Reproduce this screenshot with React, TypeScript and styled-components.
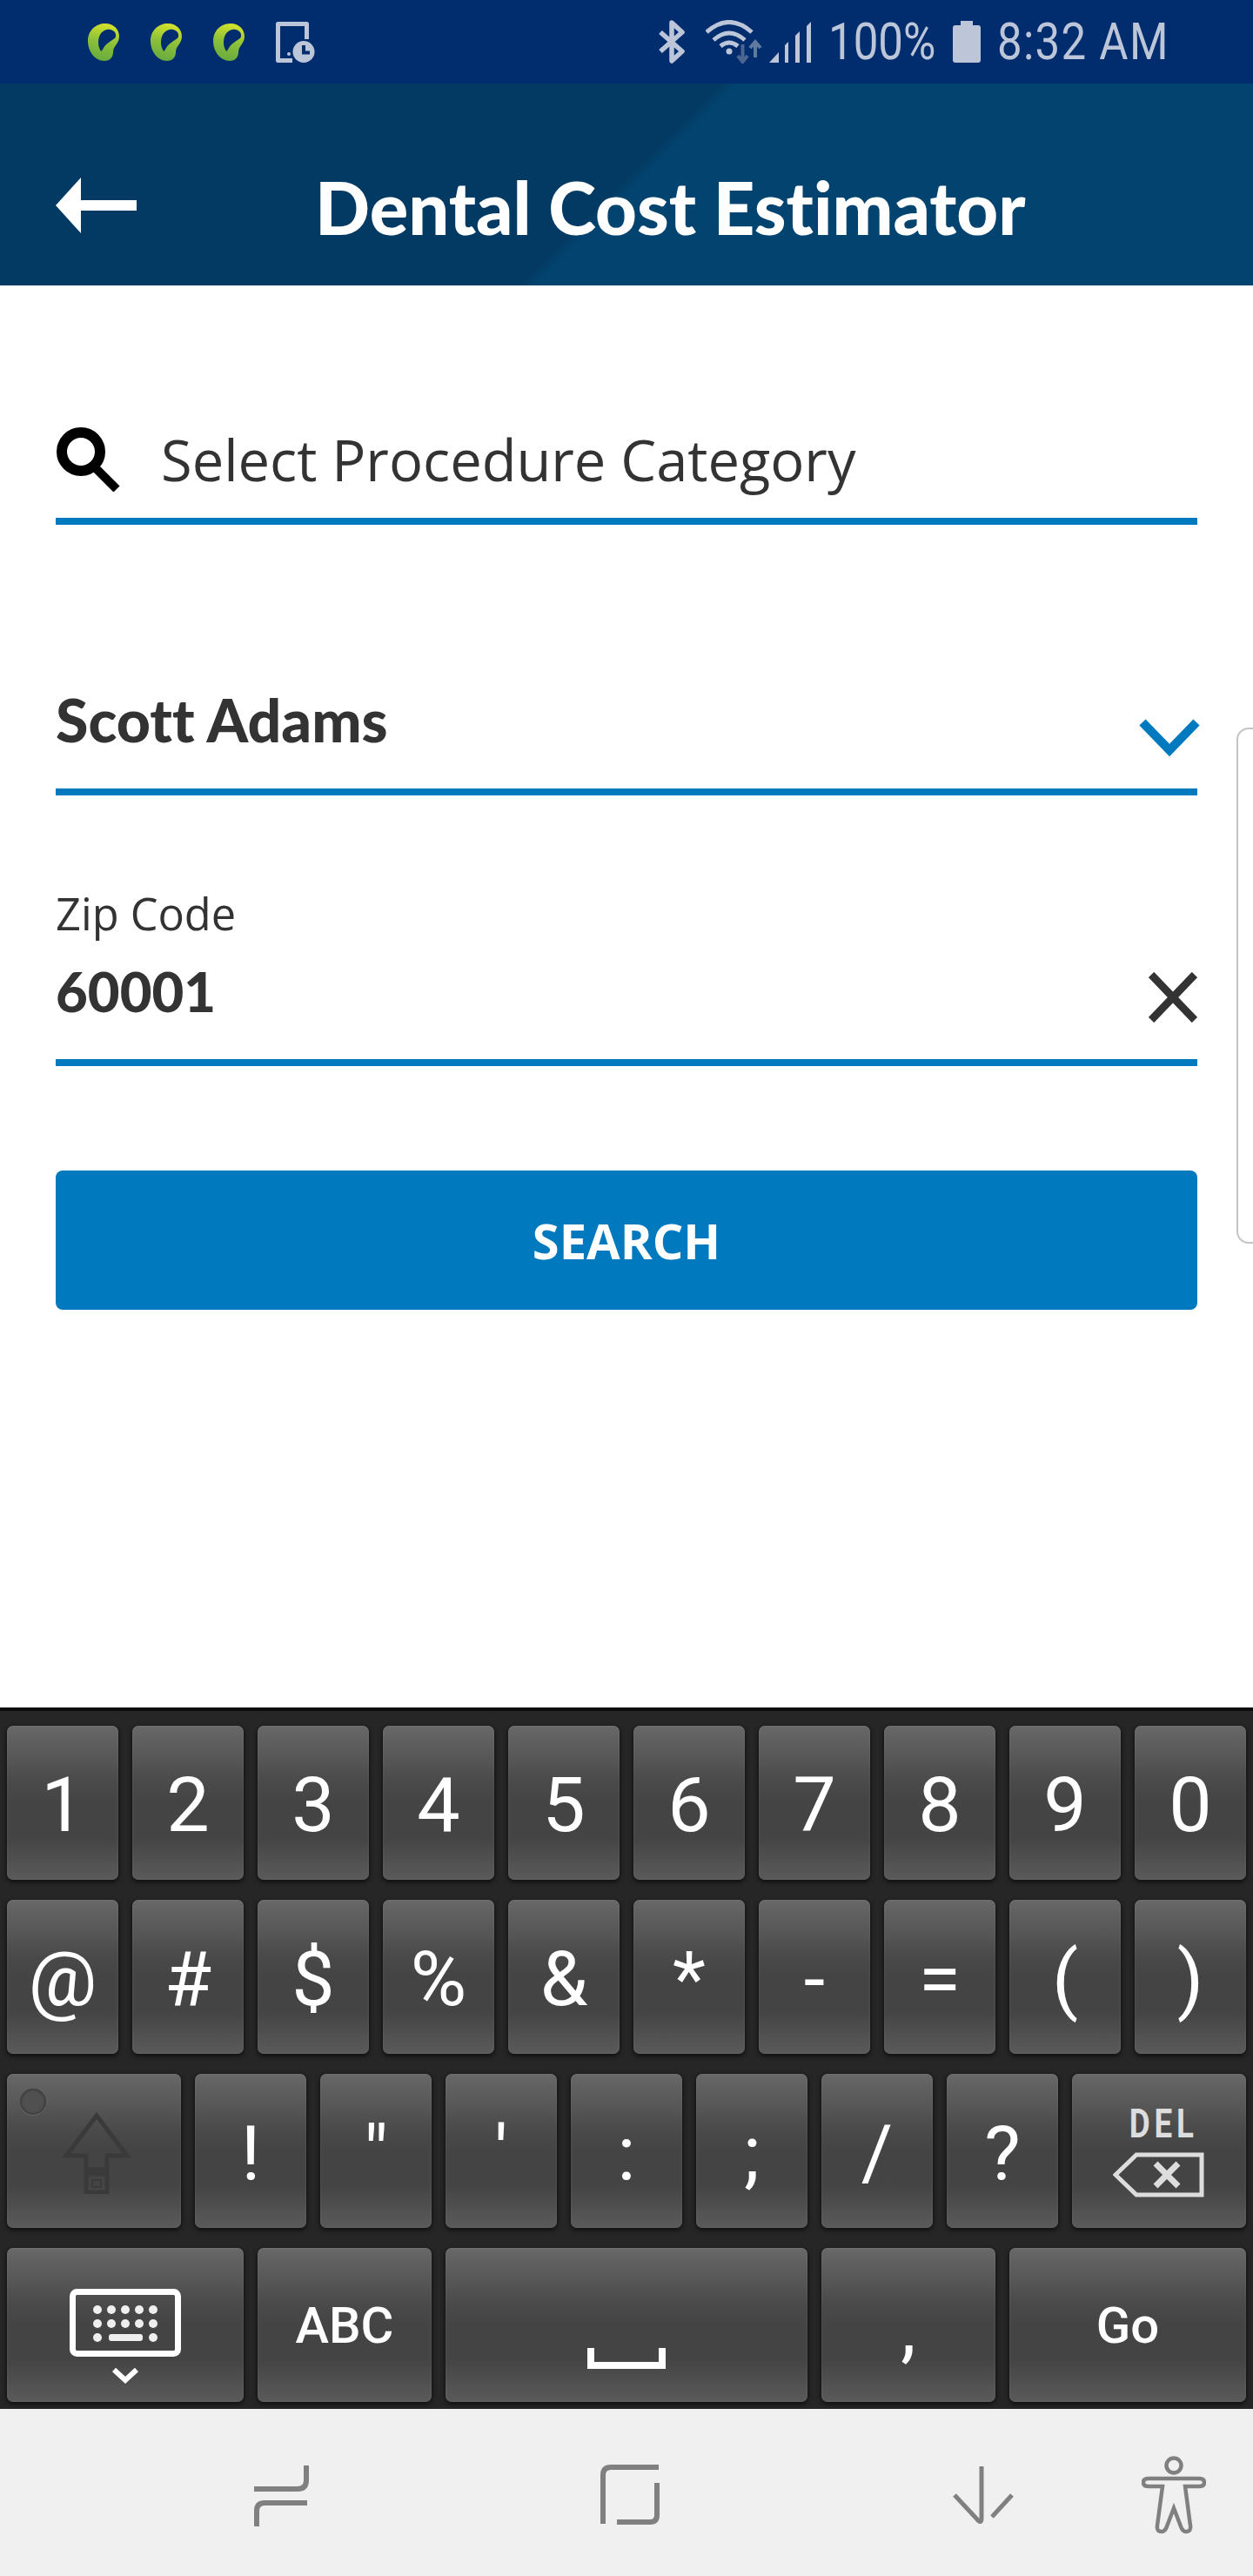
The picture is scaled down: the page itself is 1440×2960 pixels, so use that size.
import styled, { createGlobalStyle } from "styled-components";

const GlobalStyle = createGlobalStyle`
	html, body {
		margin: 0;
		padding: 0;
		background: #fff;
	}
`;

const Page = styled.div`
	position: relative;
	width: 1440px;
	height: 2960px;
	display: flex;
	flex-direction: column;
	overflow: hidden;
	background: #fff;
`;

const StatusBar = styled.div`
	height: 96px;
	background: #012d6e;
	display: flex;
	align-items: center;
	padding: 0 102px 0 101px;
	color: #bcc6d8;
	font-family: Roboto, sans-serif;
`;

const NotifyIcons = styled.div`
	display: flex;
	align-items: center;
	gap: 36px;
`;

const SystemIcons = styled.div`
	margin-left: auto;
	display: flex;
	align-items: center;
`;

const StatusText = styled.span<{ $w: number; $left: number; $spacing?: number }>`
	display: inline-block;
	width: ${(p) => p.$w}px;
	margin-left: ${(p) => p.$left}px;
	font-size: 60px;
	line-height: 60px;
	font-weight: 400;
	letter-spacing: ${(p) => p.$spacing ?? 0}px;
	white-space: nowrap;
	transform-origin: left center;
	transform: scaleX(0.85);
`;

const Spaced = styled.svg<{ $left?: number }>`
	display: block;
	flex: none;
	margin-left: ${(p) => p.$left ?? 0}px;
`;

const Header = styled.header`
	box-sizing: border-box;
	height: 232px;
	display: flex;
	align-items: center;
	padding: 48px 0 0 64px;
	background: linear-gradient(135deg, #033a63 0%, #033a63 49.6%, #02436f 50.6%, #02446f 100%);
`;

const Title = styled.h1`
	margin: 4px 0 0 205px;
	font-family: Lato, sans-serif;
	font-size: 83px;
	line-height: 92px;
	font-weight: 900;
	font-variant-ligatures: none;
	color: #fff;
	white-space: nowrap;
`;

const Form = styled.main`
	padding: 0 64px;
`;

const Field = styled.div<{ $top: number; $height: number }>`
	box-sizing: border-box;
	margin-top: ${(p) => p.$top}px;
	height: ${(p) => p.$height}px;
	border-bottom: 8px solid #0079be;
	display: flex;
	justify-content: space-between;
`;

const SearchField = styled(Field)`
	align-items: center;
	justify-content: flex-start;
	gap: 47px;
	padding-bottom: 8px;
`;

const Placeholder = styled.span`
	font-family: "Open Sans", sans-serif;
	font-size: 65px;
	line-height: 88px;
	color: #333;
	white-space: nowrap;
`;

const StrongValue = styled.span<{ $size: number }>`
	font-family: Lato, sans-serif;
	font-size: ${(p) => p.$size}px;
	line-height: 92px;
	font-weight: 900;
	font-variant-ligatures: none;
	color: #333;
	white-space: nowrap;
`;

const ZipColumn = styled.div`
	display: flex;
	flex-direction: column;
	padding-top: 9px;
`;

const ZipLabel = styled.span`
	font-family: "Open Sans", sans-serif;
	font-size: 50.5px;
	line-height: 68px;
	margin-bottom: 9px;
	color: #333;
`;

const SearchButton = styled.button`
	display: block;
	box-sizing: border-box;
	width: 100%;
	height: 160px;
	margin-top: 120px;
	border: 0;
	border-radius: 8px;
	background: #0079be;
	color: #fff;
	font-family: "Open Sans", sans-serif;
	font-size: 56px;
	font-weight: 700;
`;

const SideHandle = styled.div`
	position: absolute;
	right: -4px;
	top: 836px;
	width: 19px;
	height: 589px;
	border: 2px solid #c4c4c4;
	border-radius: 14px 0 0 14px;
	background: #fff;
`;

const Keyboard = styled.section`
	margin-top: auto;
	box-sizing: border-box;
	height: 806px;
	border-top: 4px solid #0c0c0c;
	background: #262626;
	padding: 17px 8px 8px;
	display: flex;
	flex-direction: column;
	gap: 23px;
`;

const KeyRow = styled.div`
	display: flex;
	gap: 16px;
`;

const Key = styled.div<{ $w?: number; $label?: boolean }>`
	position: relative;
	box-sizing: border-box;
	flex: none;
	width: ${(p) => p.$w ?? 128}px;
	height: 177px;
	padding-top: ${(p) => (p.$label ? 0 : 4)}px;
	border-radius: 7px;
	display: flex;
	flex-direction: column;
	align-items: center;
	justify-content: center;
	background: linear-gradient(180deg, #686868 0%, #4a4a4a 36%, #444 50%, #444 72%, #5a5a5a 100%);
	box-shadow:
		inset 0 0 2px 1px rgba(255, 255, 255, 0.06),
		0 2px 4px 1px rgba(0, 0, 0, 0.55);
	color: #fff;
	font-family: Roboto, sans-serif;
	font-size: ${(p) => (p.$label ? 58 : 88)}px;
	font-weight: ${(p) => (p.$label ? 500 : 400)};
	line-height: 100px;
`;

const ShiftDot = styled.span`
	position: absolute;
	left: 15px;
	top: 17px;
	width: 30px;
	height: 30px;
	border-radius: 50%;
	background: #505050;
	box-shadow:
		inset 0 0 2px 2px #3f3f3f,
		0 1px 1px rgba(255, 255, 255, 0.15);
`;

const DelLabel = styled.span`
	display: block;
	font-size: 46px;
	line-height: 36px;
	font-weight: 700;
	letter-spacing: 6px;
	color: #ddd;
	margin: 0 0 15px 10px;
	transform: scaleX(0.8);
`;

const KeyIcon = styled.svg<{ $top?: number; $left?: number; $right?: number }>`
	display: block;
	flex: none;
	margin-top: ${(p) => p.$top ?? 0}px;
	margin-left: ${(p) => p.$left ?? 0}px;
	margin-right: ${(p) => p.$right ?? 0}px;
`;

const NavBar = styled.nav`
	box-sizing: border-box;
	height: 192px;
	flex: none;
	background: #f0f0f0;
	display: flex;
	align-items: center;
	padding: 6px 0 0 290px;
`;

const digits = ["1", "2", "3", "4", "5", "6", "7", "8", "9", "0"];
const symbols = ["@", "#", "$", "%", "&", "*", "-", "=", "(", ")"];
const punctuation = ["!", '"', "'", ":", ";", "/", "?"];
const dotColumns = [32, 48, 64, 80, 96];

function Leaf() {
	return (
		<svg width="36" height="43" viewBox="0 0 36 43">
			<defs>
				<linearGradient id="leafFill" x1="0.6" y1="0" x2="0.4" y2="1">
					<stop offset="0" stopColor="#d6e32c" />
					<stop offset="0.5" stopColor="#8cc03a" />
					<stop offset="1" stopColor="#66aa3e" />
				</linearGradient>
			</defs>
			<path
				d="M20 0C30 0 36 7 36 15C36 23 29 26 29 33C29 39 25 43 19 43C8 43 0 32 0 20C0 8 9 0 20 0Z"
				fill="url(#leafFill)"
			/>
			<path
				d="M22 7C28 6 33 10 32 15C31 19 23 20 18 28C16 32 15 33 14 30C10 22 12 9 22 7Z"
				fill="#012d6e"
			/>
		</svg>
	);
}

export default function App() {
	return (
		<Page>
			<GlobalStyle />
			<StatusBar>
				<NotifyIcons>
					<Leaf />
					<Leaf />
					<Leaf />
					<svg width="45" height="47" viewBox="0 0 45 47">
						<path d="M19 44.5H2.5V2.5H35.5V20" fill="none" stroke="#bcc6d8" strokeWidth="5" strokeLinejoin="round" />
						<circle cx="15" cy="37" r="2" fill="#bcc6d8" />
						<circle cx="32" cy="34.5" r="12.5" fill="#bcc6d8" />
						<path d="M32 27V35.5H39" fill="none" stroke="#012d6e" strokeWidth="4" />
					</svg>
				</NotifyIcons>
				<SystemIcons>
					<Spaced width="31" height="50" viewBox="0 0 31 50">
						<path d="M3 14L28 36L16 47V3L28 14L3 36" fill="none" stroke="#bcc6d8" strokeWidth="5.5" strokeLinejoin="round" />
					</Spaced>
					<Spaced $left={24} width="66" height="50" viewBox="0 0 66 50">
						<g fill="none" stroke="#bcc6d8" strokeWidth="5">
							<path d="M1 14Q27 -9 53 14" />
							<path d="M9 23Q27 7 45 23" />
							<path d="M17 30Q27 22 37 30" />
						</g>
						<circle cx="27" cy="36" r="3.5" fill="#bcc6d8" />
						<path d="M42.5 28V46M37 41L42.5 48L48 41" fill="none" stroke="#4c6593" strokeWidth="4" />
						<path d="M57 43V27M51 32L57 25L63 32" fill="none" stroke="#5f7ba0" strokeWidth="4" />
					</Spaced>
					<Spaced $left={7} width="48" height="47" viewBox="0 0 48 47">
						<polygon points="0,47 11,35 11,47" fill="#bcc6d8" />
						<polygon points="18,47 18,27 22,23 22,47" fill="#bcc6d8" />
						<polygon points="30,47 30,16 35,11 35,47" fill="#bcc6d8" />
						<polygon points="43,47 43,5 48,0 48,47" fill="#bcc6d8" />
					</Spaced>
					<StatusText $left={20} $w={143}>
						100%
					</StatusText>
					<Spaced width="32" height="48" viewBox="0 0 32 48">
						<path d="M9 0H23V5H29Q32 5 32 8V45Q32 48 29 48H3Q0 48 0 45V8Q0 5 3 5H9Z" fill="#bcc6d8" />
					</Spaced>
					<StatusText $left={19} $w={192} $spacing={1.5}>
						8:32 AM
					</StatusText>
				</SystemIcons>
			</StatusBar>

			<Header>
				<svg width="93" height="64" viewBox="0 0 93 64">
					<polygon points="0,32 29,0 29,26 93,26 93,38 29,38 29,64" fill="#fff" />
				</svg>
				<Title>Dental Cost Estimator</Title>
			</Header>

			<Form>
				<SearchField $top={140} $height={135}>
					<svg width="74" height="74" viewBox="0 0 74 74">
						<circle cx="29" cy="28" r="22" fill="none" stroke="#000" strokeWidth="12" />
						<path d="M45 46L70 71" stroke="#000" strokeWidth="10" />
					</svg>
					<Placeholder>Select Procedure Category</Placeholder>
				</SearchField>

				<Field $top={178} $height={133}>
					<StrongValue $size={68}>Scott Adams</StrongValue>
					<KeyIcon $top={45} $right={-4} width="72" height="44" viewBox="0 0 72 44">
						<path d="M5 4L36 36L67 4" fill="none" stroke="#0079be" strokeWidth="10" />
					</KeyIcon>
				</Field>

				<Field $top={93} $height={218}>
					<ZipColumn>
						<ZipLabel>Zip Code</ZipLabel>
						<StrongValue $size={63.5}>60001</StrongValue>
					</ZipColumn>
					<KeyIcon $top={110} width="56" height="58" viewBox="0 0 56 58">
						<path d="M3 3L53 55M53 3L3 55" fill="none" stroke="#333" strokeWidth="9" />
					</KeyIcon>
				</Field>

				<SearchButton>SEARCH</SearchButton>
			</Form>

			<SideHandle />

			<Keyboard>
				<KeyRow>
					{digits.map((d) => (
						<Key key={d}>{d}</Key>
					))}
				</KeyRow>
				<KeyRow>
					{symbols.map((s) => (
						<Key key={s}>{s}</Key>
					))}
				</KeyRow>
				<KeyRow>
					<Key $w={200}>
						<ShiftDot />
						<KeyIcon $left={6} width="80" height="94" viewBox="0 0 80 94">
							<g fill="none" stroke="#3a3a3a" strokeWidth="5">
								<path d="M40 4L75 50H52V66H28V50H5Z" />
								<rect x="28" y="71" width="24" height="21" />
								<rect x="35" y="78" width="10" height="8" strokeWidth="2" />
							</g>
						</KeyIcon>
					</Key>
					{punctuation.map((p) => (
						<Key key={p}>{p}</Key>
					))}
					<Key $w={200}>
						<DelLabel>DEL</DelLabel>
						<svg width="106" height="52" viewBox="0 0 106 52">
							<path d="M3 26L27 3H102V49H27Z" fill="none" stroke="#ddd" strokeWidth="5" />
							<path d="M49 13L75 39M75 13L49 39" fill="none" stroke="#ddd" strokeWidth="7" />
						</svg>
					</Key>
				</KeyRow>
				<KeyRow>
					<Key $w={272}>
						<KeyIcon $top={25} width="128" height="112" viewBox="0 0 128 112">
							<rect x="3.5" y="3.5" width="121" height="71" rx="5" fill="none" stroke="#fff" strokeWidth="7" />
							{dotColumns.map((x) => (
								<circle key={`a${x}`} cx={x} cy="24" r="5" fill="#eee" />
							))}
							{dotColumns.map((x) => (
								<circle key={`b${x}`} cx={x} cy="40" r="5" fill="#eee" />
							))}
							<circle cx="32" cy="56" r="5" fill="#eee" />
							<circle cx="96" cy="56" r="5" fill="#eee" />
							<rect x="45" y="52" width="39" height="8" rx="3" fill="#eee" />
							<path d="M51 93L64 105L77 93" fill="none" stroke="#fff" strokeWidth="6" />
						</KeyIcon>
					</Key>
					<Key $w={200} $label>
						ABC
					</Key>
					<Key $w={416}>
						<KeyIcon $top={72} width="90" height="24" viewBox="0 0 90 24">
							<path d="M4 0V20H86V0" fill="none" stroke="#fff" strokeWidth="8" />
						</KeyIcon>
					</Key>
					<Key $w={200}>,</Key>
					<Key $w={272} $label>
						Go
					</Key>
				</KeyRow>
			</Keyboard>

			<NavBar>
				<svg width="66" height="72" viewBox="0 0 66 72">
					<g fill="none" stroke="#808080" strokeWidth="6">
						<path d="M62 2V19Q62 29 52 29H2" />
						<path d="M63 45H14Q5 45 5 54V72" />
					</g>
				</svg>
				<Spaced $left={334} width="68" height="70" viewBox="0 0 68 70">
					<g fill="none" stroke="#808080" strokeWidth="6">
						<path d="M3 68V12Q3 3 12 3H67" />
						<path d="M65 21V58Q65 66 57 66H19" />
					</g>
				</Spaced>
				<Spaced $left={336} width="72" height="66" viewBox="0 0 72 66">
					<g fill="none" stroke="#808080" strokeWidth="5">
						<path d="M3 33L31 63Q34 65 34 60V0" />
						<path d="M69 33L46 58" />
					</g>
				</Spaced>
				<Spaced $left={146} width="74" height="90" viewBox="0 0 74 90">
					<circle cx="37" cy="11" r="8.5" fill="none" stroke="#808080" strokeWidth="4.5" />
					<path
						d="M8 26H66Q72 26 72 30.5Q72 35 66 35H50L56 80Q57 87 51 87Q47 87 45 81L37 60L29 81Q27 87 23 87Q17 87 18 80L24 35H8Q2 35 2 30.5Q2 26 8 26Z"
						fill="none"
						stroke="#808080"
						strokeWidth="4.5"
					/>
				</Spaced>
			</NavBar>
		</Page>
	);
}
